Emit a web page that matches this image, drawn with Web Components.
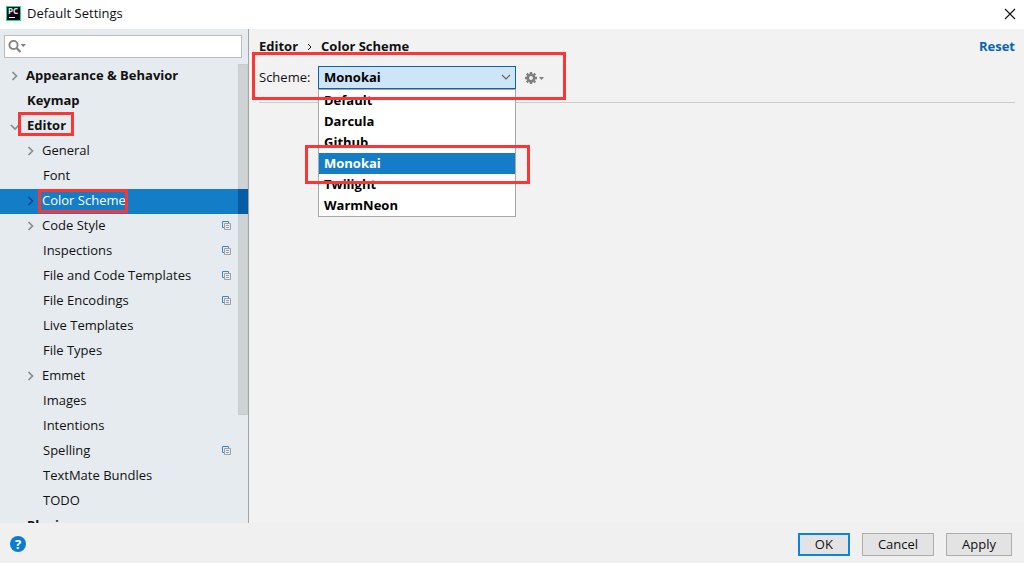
<!DOCTYPE html>
<html lang="en">
<head>
<meta charset="utf-8">
<title>Default Settings</title>
<style>
body {
  margin: 0;
  font: 13px/21px "Open Sans", "Noto Sans", sans-serif;
  color: #111;
}
</style>
</head>
<body>
<settings-window></settings-window>

<script>
function define(name, css, html, setup) {
  const template = document.createElement('template');
  template.innerHTML = '<style>' + css + '</style>' + html;

  customElements.define(
    name,
    class extends HTMLElement {
      constructor() {
        super();
        this.attachShadow({ mode: 'open' }).appendChild(template.content.cloneNode(true));
        if (setup) setup.call(this, this.shadowRoot);
      }
    }
  );
}

// red frame round the slotted content, reach set by --reach (an inset)
define('red-frame', `
:host {
  display: inline-block;
  position: relative;
}
:host::after {
  content: "";
  position: absolute;
  inset: var(--reach, -2px);
  border: 3px solid #fc3535;
  pointer-events: none;
  z-index: 5;
}
`, `<slot></slot>`);

define('title-bar', `
:host {
  display: flex;
  align-items: center;
  gap: 6px;
  height: 27px;
  padding: 0 8px 2px 6px;
  background: #fff;
}
h1 {
  flex: 1;
  margin: 0;
  font-size: inherit;
  font-weight: normal;
}
text {
  font: bold 8px "Open Sans", sans-serif;
}
button {
  display: flex;
  padding: 0;
  border: 0;
  background: none;
}
`, `
<svg width="15" height="15" viewBox="0 0 15 15" aria-hidden="true">
  <rect width="15" height="15" fill="#21d789"/>
  <rect x="1" y="1" width="13" height="13" fill="#0d0713"/>
  <text x="2" y="8" fill="#e9e7ea">PC</text>
  <path d="M3 11.500h6" stroke="#fff"/>
</svg>
<h1><slot></slot></h1>
<button type="button" aria-label="Close">
  <svg width="12" height="12" viewBox="0 0 12 12"><path d="M1 1l10 10M11 1L1 11" stroke="#111" stroke-width="1.100" fill="none"/></svg>
</button>
`);

define('search-box', `
:host {
  display: block;
  margin: 6px 6px 6px 4px;
}
label {
  display: flex;
  align-items: center;
  height: 23px;
  box-sizing: border-box;
  border: 1px solid #bcbcbc;
  background: #fff;
  padding-left: 3px;
}
input {
  flex: 1;
  min-width: 0;
  border: 0;
  padding: 0 4px;
  outline: 0;
  background: none;
  font: inherit;
}
`, `
<label>
  <svg width="19" height="15" viewBox="0 0 19 15" aria-hidden="true">
    <circle cx="5.500" cy="6" r="4.100" fill="none" stroke="#7f7f7f" stroke-width="1.800"/>
    <path d="M8.500 9l4 4" stroke="#7f7f7f" stroke-width="2.200"/>
    <path d="M12.500 5h5.500l-2.750 3z" fill="#7f7f7f"/>
  </svg>
  <input type="text" aria-label="Search">
</label>
`);

define('tree-item', `
:host {
  display: flex;
  align-items: center;
  box-sizing: border-box;
  height: 25px;
  padding: 0 17px 2px 10px;
}
:host([level="1"]) {
  font-weight: bold;
}
:host([level="2"]) {
  padding-left: 26px;
}
:host([selected]) {
  background: #147dc7;
  color: #fff;
  box-shadow: inset -10px 0 #0767b8;
}
.arrow {
  width: 10px;
  height: 10px;
  margin-right: 6px;
  fill: none;
  stroke: #8a8a8a;
  stroke-width: 1.700;
}
:host([selected]) .arrow {
  stroke: #17469c;
}
.arrow path, .project {
  display: none;
}
:host([state="closed"]) .closed, :host([state="open"]) .open {
  display: inline;
}
.label {
  flex: 1;
  white-space: nowrap;
}
:host(:not([state="closed"])) .label {
  padding-left: 1px;
}
:host([project]) .project {
  display: block;
}
`, `
<svg class="arrow" viewBox="0 0 10 10" aria-hidden="true">
  <path class="closed" d="M2.500 1l4 4-4 4"/>
  <path class="open" d="M1 4l4 4 4-4"/>
</svg>
<span class="label"><slot></slot></span>
<svg class="project" width="9" height="9" viewBox="0 0 9 9" fill="none" aria-hidden="true">
  <path d="M2 6.500H.5v-6h6V2" stroke="#3d84c6"/>
  <path d="M2.500 2.500h6v6h-6zM4 4.500h3M4 6.500h3" stroke="#a0a0a0"/>
</svg>
`);

define('settings-tree', `
:host {
  display: block;
  position: relative;
  flex: 1;
  min-height: 0;
  overflow: hidden;
}
.thumb {
  position: absolute;
  top: 0;
  right: 0;
  width: 10px;
  height: 76.5%;
  box-sizing: border-box;
  background: rgba(0, 0, 0, .1);
  border: 1px solid rgba(0, 0, 0, .03);
}
`, `<slot></slot><div class="thumb"></div>`);

define('crumb-bar', `
:host {
  display: flex;
  align-items: center;
  height: 35px;
  font-weight: bold;
}
nav {
  flex: 1;
  display: flex;
  align-items: center;
  gap: 9px;
}
a {
  color: #0664b1;
  text-decoration: none;
}
`, `
<nav aria-label="Breadcrumb">
  <span>Editor</span>
  <svg width="5" height="8" viewBox="0 0 5 8" aria-hidden="true"><path d="M1 1l3 3-3 3" fill="none" stroke="#111"/></svg>
  <span>Color Scheme</span>
</nav>
<a href="#reset">Reset</a>
`);

define('scheme-picker', `
:host {
  display: flex;
  align-items: center;
}
label {
  width: 59px;
}
.combo {
  position: relative;
  width: 198px;
  font-weight: bold;
}
select {
  display: block;
  appearance: none;
  width: 100%;
  height: 23px;
  padding: 0 24px 0 5px;
  border: 1px solid #0664b1;
  border-radius: 0;
  outline: 0;
  background: #cde5f7;
  color: #000;
  font: inherit;
}
.chevron {
  position: absolute;
  top: 8px;
  right: 5px;
  pointer-events: none;
}
ul {
  position: absolute;
  top: 23px;
  left: 0;
  right: 0;
  z-index: 1;
  margin: 0;
  padding: 0;
  list-style: none;
  border: 1px solid #a8a8a8;
  background: #fff;
  color: #000;
}
li {
  padding: 0 5px;
  line-height: 21px;
}
li[aria-selected="true"] {
  background: #147dc7;
  color: #fff;
}
red-frame {
  display: block;
  --reach: -8px -15px -10px -14px;
}
`, `
<label for="scheme">Scheme:</label>
<div class="combo">
  <select id="scheme">
    <option>Default</option>
    <option>Darcula</option>
    <option>Github</option>
    <option selected>Monokai</option>
    <option>Twilight</option>
    <option>WarmNeon</option>
  </select>
  <svg class="chevron" width="10" height="7" viewBox="0 0 10 7" aria-hidden="true"><path d="M1 1l4 4 4-4" fill="none" stroke="#666" stroke-width="1.200"/></svg>
  <ul role="listbox" aria-label="Schemes">
    <li role="option" aria-selected="false">Default</li>
    <li role="option" aria-selected="false">Darcula</li>
    <li role="option" aria-selected="false">Github</li>
    <red-frame><li role="option" aria-selected="true">Monokai</li></red-frame>
    <li role="option" aria-selected="false">Twilight</li>
    <li role="option" aria-selected="false">WarmNeon</li>
  </ul>
</div>
`, function(root) {
  const select = root.querySelector('select');
  const items = root.querySelectorAll('li');

  root.querySelector('ul').addEventListener('click', e => {
    const item = e.target.closest('li');
    if (!item) return;
    select.value = item.textContent;
    items.forEach(el => el.setAttribute('aria-selected', String(el === item)));
  });
});

define('gear-button', `
:host {
  display: block;
}
button {
  display: flex;
  padding: 0;
  border: 0;
  background: none;
}
`, `
<button type="button" aria-label="Scheme actions">
  <svg width="20" height="12" viewBox="0 0 20 12" fill="none">
    <circle cx="6" cy="6" r="3.200" stroke="#7f7f7f" stroke-width="2.600"/>
    <path d="M6 0v2M6 10v2M0 6h2M10 6h2M1.700 1.700l1.500 1.500M8.800 8.800l1.500 1.500M10.300 1.700L8.800 3.200M3.200 8.800l-1.500 1.500" stroke="#7f7f7f" stroke-width="2.400"/>
    <path d="M14 5h5l-2.500 3z" fill="#7f7f7f"/>
  </svg>
</button>
`);

define('push-button', `
:host {
  display: block;
}
button {
  display: block;
  height: 23px;
  padding: 0 15px;
  border: 1px solid #adadad;
  background: #e3e3e3;
  color: #111;
  font: inherit;
  line-height: 19px;
}
:host([primary]) button {
  border: 2px solid #0a84de;
}
`, `<button type="button"><slot></slot></button>`);

define('button-bar', `
:host {
  display: flex;
  align-items: center;
  gap: 12px;
  height: 38px;
  padding: 2px 12px 0 10px;
  background: #f0f0f0;
}
.help {
  display: flex;
  margin-right: auto;
  width: 16px;
  height: 16px;
  padding: 0;
  border: 0;
  border-radius: 50%;
  justify-content: center;
  background: #0a7dd3;
  color: #fff;
  font: inherit;
  font-weight: bold;
  line-height: 16px;
}
`, `
<button class="help" type="button" aria-label="Help">?</button>
<push-button primary>OK</push-button>
<push-button>Cancel</push-button>
<push-button>Apply</push-button>
`);

define('settings-window', `
:host {
  display: grid;
  grid-template-rows: auto 1fr auto;
  height: 100vh;
  overflow: hidden;
}
.content {
  display: flex;
  min-height: 0;
}
aside {
  display: flex;
  flex-direction: column;
  width: 248px;
  border-right: 1px solid #a3a3a3;
  background: #e6ebef;
}
main {
  flex: 1;
  padding: 0 9px 0 10px;
  background: #f2f2f2;
}
.scheme {
  display: block;
  width: fit-content;
  --reach: -12px -21px -11px -7px;
}
.row {
  display: flex;
  align-items: center;
  height: 25px;
  padding-top: 2px;
  box-sizing: border-box;
}
gear-button {
  margin-left: 9px;
}
hr {
  margin: 13px 0 0;
  border: 0;
  border-top: 1px solid #cbcbcb;
}
.editor {
  --reach: -3px -8px 0 -9px;
}
.color {
  --reach: -1px -2px -2px -4px;
}
`, `
<title-bar>Default Settings</title-bar>
<div class="content">
  <aside>
    <search-box></search-box>
    <settings-tree>
      <tree-item level="1" state="closed">Appearance &amp; Behavior</tree-item>
      <tree-item level="1">Keymap</tree-item>
      <tree-item level="1" state="open"><red-frame class="editor">Editor</red-frame></tree-item>
      <tree-item level="2" state="closed">General</tree-item>
      <tree-item level="2">Font</tree-item>
      <tree-item level="2" state="closed" selected><red-frame class="color">Color Scheme</red-frame></tree-item>
      <tree-item level="2" state="closed" project>Code Style</tree-item>
      <tree-item level="2" project>Inspections</tree-item>
      <tree-item level="2" project>File and Code Templates</tree-item>
      <tree-item level="2" project>File Encodings</tree-item>
      <tree-item level="2">Live Templates</tree-item>
      <tree-item level="2">File Types</tree-item>
      <tree-item level="2" state="closed">Emmet</tree-item>
      <tree-item level="2">Images</tree-item>
      <tree-item level="2">Intentions</tree-item>
      <tree-item level="2" project>Spelling</tree-item>
      <tree-item level="2">TextMate Bundles</tree-item>
      <tree-item level="2">TODO</tree-item>
      <tree-item level="1">Plugins</tree-item>
    </settings-tree>
  </aside>
  <main>
    <crumb-bar></crumb-bar>
    <red-frame class="scheme">
      <div class="row">
        <scheme-picker></scheme-picker>
        <gear-button></gear-button>
      </div>
    </red-frame>
    <hr>
  </main>
</div>
<button-bar></button-bar>
`);
</script>
</body>
</html>
